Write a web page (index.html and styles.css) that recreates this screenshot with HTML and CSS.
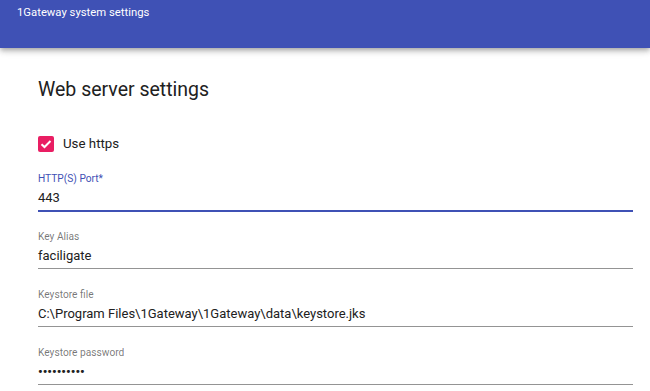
FILE: index.html
```html
<!DOCTYPE html>
<html>
<head>
<meta charset="utf-8">
<link rel="stylesheet" href="styles.css">
</head>
<body>
<header class="toolbar">
  <span class="toolbar-title">1Gateway system settings</span>
</header>
<main class="content">
  <h1 class="section-title">Web server settings</h1>
  <label class="checkbox-row">
    <span class="checkbox">
      <svg viewBox="0 0 16 16" width="16" height="16"><path d="M3.5 8.2 L6.5 11 L12.5 5" fill="none" stroke="#fff" stroke-width="2"/></svg>
    </span>
    <span class="checkbox-label">Use https</span>
  </label>
  <div class="field focused">
    <div class="field-label">HTTP(S) Port*</div>
    <div class="field-value">443</div>
  </div>
  <div class="field">
    <div class="field-label">Key Alias</div>
    <div class="field-value">faciligate</div>
  </div>
  <div class="field">
    <div class="field-label">Keystore file</div>
    <div class="field-value">C:\Program Files\1Gateway\1Gateway\data\keystore.jks</div>
  </div>
  <div class="field">
    <div class="field-label">Keystore password</div>
    <div class="field-value password">••••••••••</div>
  </div>
</main>
</body>
</html>
```

FILE: styles.css
```css
html, body {
  margin: 0;
  padding: 0;
  background: #fff;
  font-family: Roboto, "Liberation Sans", Arial, sans-serif;
  color: rgba(0,0,0,0.87);
  overflow: hidden;
}

.toolbar {
  height: 48px;
  background: #3f51b5;
  color: #fff;
  padding: 0 17px;
  box-shadow: 0 2px 4px -1px rgba(0,0,0,.2), 0 4px 5px 0 rgba(0,0,0,.14), 0 1px 10px 0 rgba(0,0,0,.12);
  position: relative;
  z-index: 1;
}

.toolbar-title {
  display: block;
  font-size: 11.3px;
  line-height: 14px;
  padding-top: 6px;
}

.content {
  padding: 30px 17px 0 38px;
}

.section-title {
  margin: 0;
  font-size: 19.5px;
  font-weight: 400;
  line-height: 24px;
  color: #212121;
}

.checkbox-row {
  display: flex;
  align-items: center;
  gap: 9px;
  margin-top: 34px;
  margin-bottom: 1.5px;
  height: 16px;
}

.checkbox {
  width: 16px;
  height: 16px;
  border-radius: 2px;
  background: #e91e63;
  display: flex;
}

.checkbox-label {
  font-size: 13.3px;
  line-height: 16px;
  color: #212121;
}

.field {
  padding-top: 19.5px;
  display: flex;
  flex-direction: column;
}

.focused {
  padding-top: 19px;
}

.field-label {
  font-size: 10.2px;
  line-height: 12px;
  color: rgba(0,0,0,0.54);
}

.focused .field-label {
  color: #3f51b5;
}

.field-value {
  font-size: 13px;
  line-height: 16px;
  margin-top: 5.5px;
  padding-bottom: 4px;
  border-bottom: 1px solid #949494;
  color: #212121;
}

.focused .field-value {
  border-bottom: 2px solid #3f51b5;
  margin-bottom: -1px;
}

.password {
  font-size: 13px;
  font-weight: 700;
}
```
